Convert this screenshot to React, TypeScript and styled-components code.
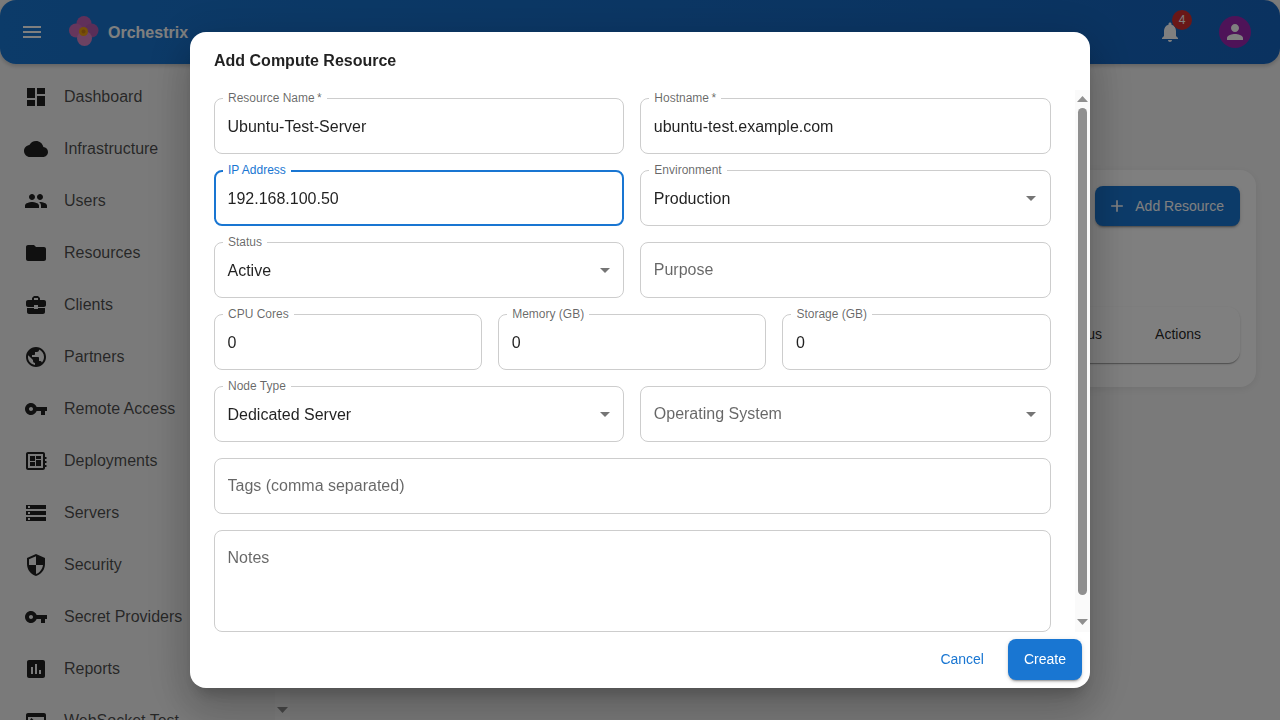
import React from 'react';
import styled, { createGlobalStyle } from 'styled-components';

const GlobalStyle = createGlobalStyle`
  html, body {
    margin: 0;
    height: 100%;
    overflow: hidden;
    background: #f5f5f5;
    font-family: "Liberation Sans", Arial, sans-serif;
  }
  * {
    box-sizing: border-box;
  }
`;

const icons = {
  dashboard: 'M3 13h8V3H3v10zm0 8h8v-6H3v6zm10 0h8V11h-8v10zm0-18v6h8V3h-8z',
  cloud: 'M19.35 10.04C18.67 6.59 15.64 4 12 4 9.11 4 6.6 5.64 5.35 8.04 2.34 8.36 0 10.91 0 14c0 3.31 2.69 6 6 6h13c2.76 0 5-2.24 5-5 0-2.64-2.05-4.78-4.65-4.96z',
  people: 'M16 11c1.66 0 2.99-1.34 2.99-3S17.66 5 16 5c-1.66 0-3 1.34-3 3s1.34 3 3 3zm-8 0c1.66 0 2.99-1.34 2.99-3S9.66 5 8 5C6.34 5 5 6.34 5 8s1.34 3 3 3zm0 2c-2.33 0-7 1.17-7 3.5V19h14v-2.5c0-2.33-4.67-3.5-7-3.5zm8 0c-.29 0-.62.02-.97.05 1.16.84 1.97 1.97 1.97 3.45V19h6v-2.5c0-2.33-4.67-3.5-7-3.5z',
  folder: 'M10 4H4c-1.1 0-1.99.9-1.99 2L2 18c0 1.1.9 2 2 2h16c1.1 0 2-.9 2-2V8c0-1.1-.9-2-2-2h-8l-2-2z',
  business: 'M10 16v-1H3.01L3 19c0 1.11.89 2 2 2h14c1.11 0 2-.89 2-2v-4h-7v1h-4zm10-9h-4.01V5l-2-2h-4l-2 2v2H4c-1.1 0-2 .9-2 2v3c0 1.11.89 2 2 2h6v-2h4v2h6c1.1 0 2-.9 2-2V9c0-1.1-.9-2-2-2zm-6 0h-4V5h4v2z',
  publicIcon: 'M12 2C6.48 2 2 6.48 2 12s4.48 10 10 10 10-4.48 10-10S17.52 2 12 2zm-1 17.93c-3.95-.49-7-3.85-7-7.93 0-.62.08-1.21.21-1.79L9 15v1c0 1.1.9 2 2 2v1.93zm6.9-2.54c-.26-.81-1-1.39-1.9-1.39h-1v-3c0-.55-.45-1-1-1H8v-2h2c.55 0 1-.45 1-1V7h2c1.1 0 2-.9 2-2v-.41c2.93 1.19 5 4.06 5 7.41 0 2.08-.8 3.97-2.1 5.39z',
  key: 'M12.65 10C11.83 7.67 9.61 6 7 6c-3.31 0-6 2.69-6 6s2.69 6 6 6c2.61 0 4.83-1.67 5.65-4H17v4h4v-4h2v-4H12.65zM7 14c-1.1 0-2-.9-2-2s.9-2 2-2 2 .9 2 2-.9 2-2 2z',
  deployments: 'M19 3H4c-1.1 0-2 .9-2 2v14c0 1.1.9 2 2 2h15c1.1 0 2-.9 2-2v-1h1.5v-2H21v-2h1.5v-2H21v-2h1.5V8H21V5c0-1.1-.9-2-2-2zm0 16H4V5h15v14zM6 7h5v5H6V7zm0 6h5v4H6v-4zm6-6h5v3h-5V7zm0 4h5v6h-5v-6z',
  storage: 'M2 20h20v-4H2v4zm2-3h2v2H4v-2zM2 4v4h20V4H2zm4 3H4V5h2v2zm-4 7h20v-4H2v4zm2-3h2v2H4v-2z',
  security: 'M12 1L3 5v6c0 5.55 3.84 10.74 9 12 5.16-1.26 9-6.45 9-12V5l-9-4zm0 10.99h7c-.53 4.12-3.28 7.79-7 8.94V12H5V6.3l7-3.11v8.8z',
  assessment: 'M19 3H5c-1.1 0-2 .9-2 2v14c0 1.1.9 2 2 2h14c1.1 0 2-.9 2-2V5c0-1.1-.9-2-2-2zM9 17H7v-7h2v7zm4 0h-2V7h2v10zm4 0h-2v-4h2v4z',
  terminal: 'M20 4H4c-1.1 0-2 .9-2 2v12c0 1.1.9 2 2 2h16c1.1 0 2-.9 2-2V6c0-1.1-.9-2-2-2zm0 14H4V8h16v10zm-2-1h-6v-2h6v2zM7.5 17l-1.41-1.41L8.67 13l-2.59-2.59L7.5 9l4 4-4 4z',
  menu: 'M3 18h18v-2H3v2zm0-5h18v-2H3v2zm0-7v2h18V6H3z',
  bell: 'M12 22c1.1 0 2-.9 2-2h-4c0 1.1.89 2 2 2zm6-6v-5c0-3.07-1.64-5.64-4.5-6.32V4c0-.83-.67-1.5-1.5-1.5s-1.5.67-1.5 1.5v.68C7.63 5.36 6 7.92 6 11v5l-2 2v1h16v-1l-2-2z',
  person: 'M12 12c2.21 0 4-1.79 4-4s-1.79-4-4-4-4 1.79-4 4 1.79 4 4 4zm0 2c-2.67 0-8 1.34-8 4v2h16v-2c0-2.66-5.33-4-8-4z',
  add: 'M19 13h-6v6h-2v-6H5v-2h6V5h2v6h6v2z',
  drop: 'M7 10l5 5 5-5z',
};

const navItems: [string, string][] = [
  ['Dashboard', icons.dashboard],
  ['Infrastructure', icons.cloud],
  ['Users', icons.people],
  ['Resources', icons.folder],
  ['Clients', icons.business],
  ['Partners', icons.publicIcon],
  ['Remote Access', icons.key],
  ['Deployments', icons.deployments],
  ['Servers', icons.storage],
  ['Security', icons.security],
  ['Secret Providers', icons.key],
  ['Reports', icons.assessment],
  ['WebSocket Test', icons.terminal],
];

const Icon = ({ d, size = 24 }: { d: string; size?: number }) => (
  <svg width={size} height={size} viewBox="0 0 24 24" fill="currentColor">
    <path d={d} />
  </svg>
);

const Logo = () => (
  <svg width="32" height="32" viewBox="0 0 32 32">
    <circle cx="16" cy="7.5" r="7.5" fill="#c060b4" />
    <circle cx="8" cy="14.5" r="7" fill="#cc6cb8" />
    <circle cx="23.5" cy="14.5" r="7" fill="#b45cb0" />
    <circle cx="16.5" cy="22.5" r="7.5" fill="#d884c4" />
    <circle cx="15.5" cy="15.5" r="4.5" fill="#f0a010" />
    <circle cx="15.5" cy="15.5" r="2" fill="#d08010" />
  </svg>
);

const Page = styled.div`
  height: 100vh;
  display: flex;
  flex-direction: column;
`;

const Header = styled.header`
  height: 64px;
  flex: none;
  display: flex;
  align-items: center;
  padding: 0 29px 0 20px;
  border-radius: 16px;
  background: linear-gradient(90deg, #1976d2, #1565c0);
  color: #fff;
  box-shadow: 0 2px 4px rgba(0, 0, 0, 0.2);
`;

const MenuButton = styled.div`
  display: flex;
  margin-right: 24px;
`;

const Brand = styled.div`
  display: flex;
  align-items: center;
  gap: 8px;
  font-size: 16px;
  font-weight: 700;
  flex: 1;
`;

const BrandName = styled.span`
  padding-top: 2px;
`;

const BellWrap = styled.div`
  position: relative;
  display: flex;
  margin-right: 37px;
`;

const Badge = styled.span`
  position: absolute;
  top: -10px;
  left: 14px;
  width: 20px;
  height: 20px;
  border-radius: 50%;
  background: #d32f2f;
  font-size: 12px;
  display: flex;
  align-items: center;
  justify-content: center;
`;

const Avatar = styled.div`
  width: 32px;
  height: 32px;
  border-radius: 50%;
  background: #9c27b0;
  display: flex;
  align-items: center;
  justify-content: center;
`;

const Body = styled.div`
  flex: 1;
  min-height: 0;
  display: flex;
`;

const Sidebar = styled.nav`
  width: 290px;
  flex: none;
  display: flex;
`;

const NavList = styled.div`
  flex: 1;
  min-width: 0;
  padding-top: 7px;
  overflow: hidden;
`;

const NavItem = styled.div`
  height: 52px;
  display: flex;
  align-items: center;
  gap: 16px;
  padding-left: 24px;
  font-size: 16px;
  color: rgba(0, 0, 0, 0.7);
  white-space: nowrap;

  svg {
    flex: none;
    color: rgba(0, 0, 0, 0.87);
  }
`;

// Scrollbar rail with its arrows, the thumb length comes in as a prop
const Rail = styled.div`
  width: 15px;
  flex: none;
  display: flex;
  flex-direction: column;
  background: #fafafa;
  color: #8f8f8f;
`;

const RailTrack = styled.div`
  flex: 1;
  min-height: 0;
  padding: 3px;
`;

const RailThumb = styled.div<{ $length: number }>`
  height: ${p => p.$length}px;
  border-radius: 5px;
  background: #8f8f8f;
`;

const RailArrow = ({ down }: { down?: boolean }) => (
  <svg width="15" height="15" viewBox="0 0 15 15" fill="currentColor">
    <polygon points={down ? '2,2 13,2 7.5,8' : '2,12 13,12 7.5,6'} />
  </svg>
);

const ScrollRail = ({ thumb }: { thumb: number }) => (
  <Rail>
    <RailArrow />
    <RailTrack>
      <RailThumb $length={thumb} />
    </RailTrack>
    <RailArrow down />
  </Rail>
);

const Main = styled.main`
  flex: 1;
  min-width: 0;
  padding: 106px 24px 0;
`;

const Card = styled.section`
  height: 217px;
  padding: 16px;
  border-radius: 16px;
  background: #fff;
  box-shadow: 0 2px 8px rgba(0, 0, 0, 0.08);
`;

const CardTop = styled.div`
  display: flex;
  justify-content: flex-end;
  margin-bottom: 81px;
`;

const AddButton = styled.div`
  height: 40px;
  display: flex;
  align-items: center;
  gap: 8px;
  padding: 0 16px 0 12px;
  border-radius: 8px;
  background: #1976d2;
  color: #fff;
  font-size: 14px;
  box-shadow: 0 3px 1px -2px rgba(0, 0, 0, 0.2), 0 2px 2px rgba(0, 0, 0, 0.14), 0 1px 5px rgba(0, 0, 0, 0.12);
`;

const TableHead = styled.div`
  height: 56px;
  display: flex;
  align-items: center;
  justify-content: flex-end;
  gap: 53px;
  padding: 0 39px 2px 0;
  border-radius: 12px;
  font-size: 14px;
  color: rgba(0, 0, 0, 0.87);
  box-shadow: 0 2px 1px -1px rgba(0, 0, 0, 0.2), 0 1px 1px rgba(0, 0, 0, 0.14), 0 1px 3px rgba(0, 0, 0, 0.12);
`;

const Backdrop = styled.div`
  position: fixed;
  inset: 0;
  background: rgba(0, 0, 0, 0.5);
  display: flex;
  align-items: center;
  justify-content: center;
`;

const Dialog = styled.div`
  width: 900px;
  height: 656px;
  display: flex;
  flex-direction: column;
  background: #fff;
  border-radius: 16px;
  box-shadow: 0 11px 15px -7px rgba(0, 0, 0, 0.2), 0 24px 38px 3px rgba(0, 0, 0, 0.14), 0 9px 46px 8px rgba(0, 0, 0, 0.12);
`;

const DialogTitle = styled.h2`
  margin: 0;
  height: 58px;
  flex: none;
  padding: 17px 24px 0;
  font-size: 16px;
  line-height: 24px;
  font-weight: 700;
  color: rgba(0, 0, 0, 0.87);
`;

const DialogBody = styled.div`
  flex: 1;
  min-height: 0;
  display: flex;
`;

const DialogContent = styled.div`
  flex: 1;
  min-width: 0;
  overflow: hidden;
  padding: 8px 24.4px 0 24px;
  display: flex;
  flex-direction: column;
  gap: 16px;
`;

const Row = styled.div<{ $cols: number }>`
  display: grid;
  grid-template-columns: repeat(${p => p.$cols}, 1fr);
  gap: 16px;
`;

const FieldBox = styled.div<{ $focused?: boolean; $tall?: boolean }>`
  position: relative;
  height: ${p => (p.$tall ? '102px' : '56px')};
  flex: none;
  display: flex;
  align-items: ${p => (p.$tall ? 'flex-start' : 'center')};
  min-width: 0;
  border-radius: 8px;
  border: 1px solid #cdcdcd;
  padding: 0 12.5px;
  ${p => p.$focused && 'border: 2px solid #1976d2; padding: 0 11.5px;'}
`;

const FieldLabel = styled.label<{ $focused?: boolean }>`
  position: absolute;
  top: ${p => (p.$focused ? '-9px' : '-8px')};
  left: ${p => (p.$focused ? '7px' : '8px')};
  padding: 0 5px;
  background: #fff;
  font-size: 12px;
  line-height: 14px;
  color: ${p => (p.$focused ? '#1976d2' : 'rgba(0, 0, 0, 0.6)')};
  white-space: nowrap;
`;

const Input = styled.input<{ $filled?: boolean }>`
  width: 100%;
  border: 0;
  outline: 0;
  padding: ${p => (p.$filled ? '2px' : '0')} 0 0;
  background: transparent;
  font: inherit;
  font-size: 16px;
  color: rgba(0, 0, 0, 0.87);

  &::placeholder {
    color: rgba(0, 0, 0, 0.6);
    opacity: 1;
  }
`;

const TextArea = styled.textarea`
  width: 100%;
  height: 100%;
  border: 0;
  outline: 0;
  resize: none;
  padding: 15px 0;
  background: transparent;
  font: inherit;
  font-size: 16px;
  line-height: 23px;

  &::placeholder {
    color: rgba(0, 0, 0, 0.6);
    opacity: 1;
  }
`;

const SelectValue = styled.div<{ $empty?: boolean }>`
  flex: 1;
  padding-top: ${p => (p.$empty ? '0' : '2px')};
  font-size: 16px;
  color: ${p => (p.$empty ? 'rgba(0, 0, 0, 0.6)' : 'rgba(0, 0, 0, 0.87)')};
`;

const SelectArrow = styled.div`
  display: flex;
  margin-right: -6px;
  color: rgba(0, 0, 0, 0.54);
`;

const DialogActions = styled.div`
  height: 56px;
  flex: none;
  display: flex;
  align-items: center;
  justify-content: flex-end;
  gap: 8px;
  padding: 7px 8px 9px;
`;

const TextButton = styled.button`
  height: 41px;
  padding: 0 16px;
  border: 0;
  border-radius: 8px;
  background: transparent;
  color: #1976d2;
  font: inherit;
  font-size: 14px;
`;

const PrimaryButton = styled(TextButton)`
  background: #1976d2;
  color: #fff;
  box-shadow: 0 3px 1px -2px rgba(0, 0, 0, 0.2), 0 2px 2px rgba(0, 0, 0, 0.14), 0 1px 5px rgba(0, 0, 0, 0.12);
`;

const TextField = ({ label, value, focused }: { label: string; value: string; focused?: boolean }) => (
  <FieldBox $focused={focused}>
    <FieldLabel $focused={focused}>{label}</FieldLabel>
    <Input $filled defaultValue={value} />
  </FieldBox>
);

const SelectField = ({ label, value }: { label: string; value: string }) => (
  <FieldBox>
    <FieldLabel>{label}</FieldLabel>
    <SelectValue>{value}</SelectValue>
    <SelectArrow>
      <Icon d={icons.drop} />
    </SelectArrow>
  </FieldBox>
);

const App = () => {
  return (
    <Page>
      <GlobalStyle />
      <Header>
        <MenuButton>
          <Icon d={icons.menu} />
        </MenuButton>
        <Brand>
          <Logo />
          <BrandName>Orchestrix</BrandName>
        </Brand>
        <BellWrap>
          <Icon d={icons.bell} />
          <Badge>4</Badge>
        </BellWrap>
        <Avatar>
          <Icon d={icons.person} />
        </Avatar>
      </Header>

      <Body>
        <Sidebar>
          <NavList>
            {navItems.map(([label, d]) => (
              <NavItem key={label}>
                <Icon d={d} />
                {label}
              </NavItem>
            ))}
          </NavList>
          <ScrollRail thumb={500} />
        </Sidebar>
        <Main>
          <Card>
            <CardTop>
              <AddButton>
                <Icon d={icons.add} size={20} />
                Add Resource
              </AddButton>
            </CardTop>
            <TableHead>
              <span>Status</span>
              <span>Actions</span>
            </TableHead>
          </Card>
        </Main>
      </Body>

      <Backdrop>
        <Dialog>
          <DialogTitle>Add Compute Resource</DialogTitle>
          <DialogBody>
            <DialogContent>
              <Row $cols={2}>
                <TextField label={'Resource Name\u2009*'} value="Ubuntu-Test-Server" />
                <TextField label={'Hostname\u2009*'} value="ubuntu-test.example.com" />
              </Row>
              <Row $cols={2}>
                <TextField label="IP Address" value="192.168.100.50" focused />
                <SelectField label="Environment" value="Production" />
              </Row>
              <Row $cols={2}>
                <SelectField label="Status" value="Active" />
                <FieldBox>
                  <Input placeholder="Purpose" />
                </FieldBox>
              </Row>
              <Row $cols={3}>
                <TextField label="CPU Cores" value="0" />
                <TextField label="Memory (GB)" value="0" />
                <TextField label="Storage (GB)" value="0" />
              </Row>
              <Row $cols={2}>
                <SelectField label="Node Type" value="Dedicated Server" />
                <FieldBox>
                  <SelectValue $empty>Operating System</SelectValue>
                  <SelectArrow>
                    <Icon d={icons.drop} />
                  </SelectArrow>
                </FieldBox>
              </Row>
              <FieldBox>
                <Input placeholder="Tags (comma separated)" />
              </FieldBox>
              <FieldBox $tall>
                <TextArea placeholder="Notes" />
              </FieldBox>
            </DialogContent>
            <ScrollRail thumb={487} />
          </DialogBody>
          <DialogActions>
            <TextButton>Cancel</TextButton>
            <PrimaryButton>Create</PrimaryButton>
          </DialogActions>
        </Dialog>
      </Backdrop>
    </Page>
  );
};

export default App;
